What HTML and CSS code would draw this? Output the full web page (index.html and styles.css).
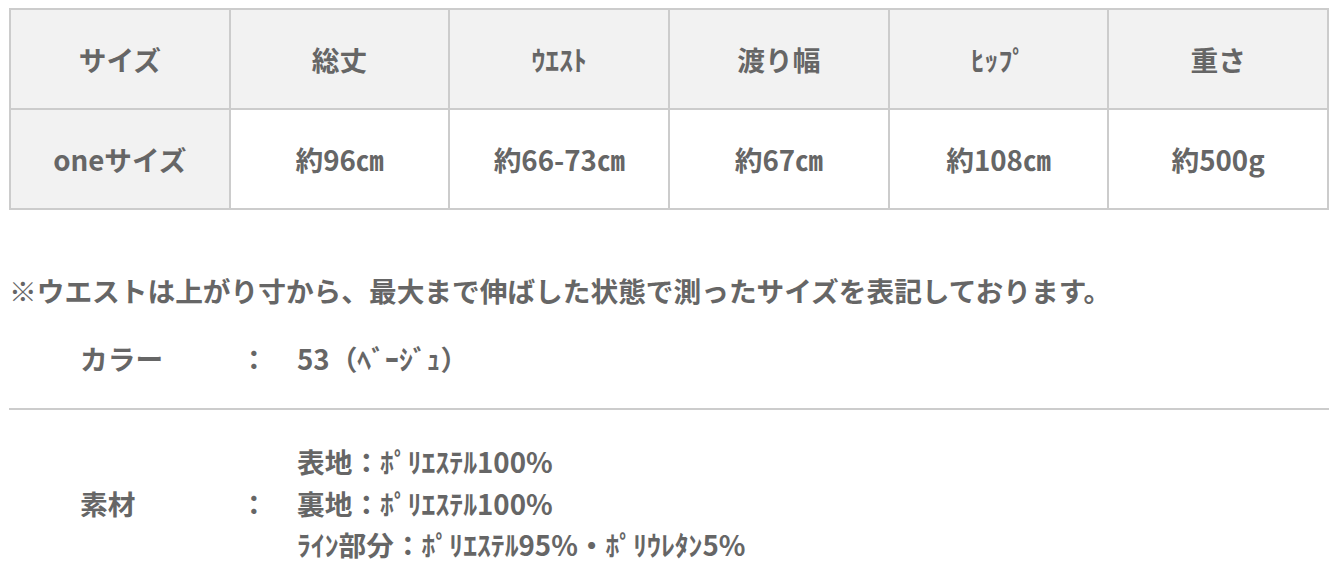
FILE: index.html
```html
<!DOCTYPE html>
<html lang="ja">
<head>
<meta charset="utf-8">
<link rel="stylesheet" href="styles.css">
</head>
<body>
<div class="page">
  <table class="size-table">
    <tr class="head">
      <th>サイズ</th>
      <th>総丈</th>
      <th>ｳｴｽﾄ</th>
      <th>渡り幅</th>
      <th>ﾋｯﾌﾟ</th>
      <th>重さ</th>
    </tr>
    <tr>
      <th>oneサイズ</th>
      <td>約96㎝</td>
      <td>約66-73㎝</td>
      <td>約67㎝</td>
      <td>約108㎝</td>
      <td>約500g</td>
    </tr>
  </table>

  <p class="note">※ウエストは上がり寸から、最大まで伸ばした状態で測ったサイズを表記しております。</p>

  <div class="spec">
    <div class="spec-label">カラー</div>
    <div class="spec-colon">：</div>
    <div class="spec-value">53（ﾍﾞｰｼﾞｭ）</div>
  </div>

  <hr class="rule">

  <div class="spec spec-material">
    <div class="spec-label">素材</div>
    <div class="spec-colon">：</div>
    <div class="spec-value">
      <div>表地：ﾎﾟﾘｴｽﾃﾙ100%</div>
      <div>裏地：ﾎﾟﾘｴｽﾃﾙ100%</div>
      <div>ﾗｲﾝ部分：ﾎﾟﾘｴｽﾃﾙ95%・ﾎﾟﾘｳﾚﾀﾝ5%</div>
    </div>
  </div>
</div>
</body>
</html>
```

FILE: styles.css
```css
html, body {
  margin: 0;
  padding: 0;
  background: #fff;
}
body {
  font-family: "Noto Sans CJK JP", "Noto Sans", sans-serif;
  font-weight: 700;
  color: #666;
  font-size: 27.7px;
}
.page {
  padding: 8px 9px 0 9px;
}
.size-table {
  width: 1320px;
  border-collapse: collapse;
  table-layout: fixed;
}
.size-table th,
.size-table td {
  border: 2px solid #ccc;
  height: 98px;
  padding: 0;
  text-align: center;
  vertical-align: middle;
  font-weight: 700;
  line-height: 1.4;
}
.size-table th {
  background: #f2f2f2;
}
.size-table td {
  background: #fff;
}
.note {
  margin: 61px 0 0 0;
  line-height: 38px;
}
.spec {
  display: flex;
  align-items: center;
  margin-top: 30px;
  line-height: 38px;
}
.spec-label {
  width: 160px;
  margin-left: 71px;
}
.spec-colon {
  width: 28px;
  margin-right: 29px;
}
.rule {
  border: 0;
  border-top: 2px solid #ccc;
  margin: 31px 0 0 0;
  height: 0;
}
.spec-material {
  margin-top: 31px;
}
.spec-material .spec-value {
  line-height: 41.5px;
}
```
